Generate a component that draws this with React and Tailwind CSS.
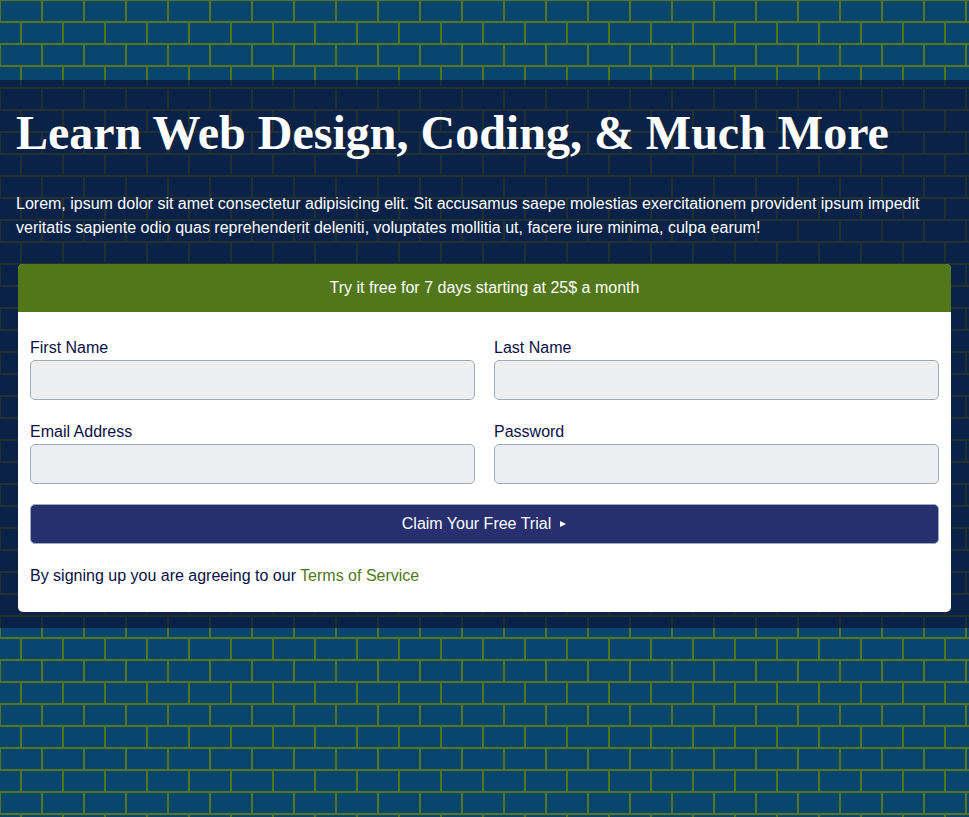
function Field({ id, label, type, autoComplete }) {
  return (
    <div className="flex flex-col">
      <label htmlFor={id}>{label}</label>
      <input
        id={id}
        name={id}
        type={type}
        autoComplete={autoComplete}
        className="h-10 w-full rounded-[5px] border border-[#9dabb9] bg-[#edeef0] px-3"
      />
    </div>
  );
}

export default function App() {
  return (
    <div className="min-h-screen bg-[#08466f] bg-[linear-gradient(#52761a_2px,transparent_2px),conic-gradient(at_2px_22px,transparent_75%,#52761a_0),conic-gradient(at_2px_22px,transparent_75%,#52761a_0)] bg-[size:42px_22px,42px_44px,42px_44px] bg-[position:0_-1px,-1px_0,20px_22px] pt-20 font-['Liberation_Sans',Arial,sans-serif] text-base text-[#0a1045]">
      <main className="flex flex-col gap-6 bg-[#0b1237]/70 px-4 pt-6 pb-4">
        <header className="text-white">
          <h1 className="mb-[30px] font-['Liberation_Serif','Times_New_Roman',serif] text-5xl leading-[58px] font-bold">
            Learn Web Design, Coding, &amp; Much More
          </h1>
          <p>
            Lorem, ipsum dolor sit amet consectetur adipisicing elit. Sit accusamus saepe molestias
            exercitationem provident ipsum impedit veritatis sapiente odio quas reprehenderit
            deleniti, voluptates mollitia ut, facere iure minima, culpa earum!
          </p>
        </header>
        <section className="mx-0.5 overflow-hidden rounded-[5px] bg-white">
          <p className="bg-[#52761a] p-3 text-center text-white">
            Try it free for 7 days starting at 25$ a month
          </p>
          <form className="grid grid-cols-2 gap-x-[19px] gap-y-5 px-3 py-6">
            <Field id="firstName" label="First Name" type="text" autoComplete="given-name" />
            <Field id="lastName" label="Last Name" type="text" autoComplete="family-name" />
            <Field id="email" label="Email Address" type="email" autoComplete="email" />
            <Field id="password" label="Password" type="password" autoComplete="new-password" />
            <button
              type="button"
              className="col-span-2 flex h-10 items-center justify-center gap-2 rounded-[5px] border border-[#9dabb9] bg-[#272f6f] text-white"
            >
              Claim Your Free Trial
              <svg viewBox="0 0 8 8" className="h-2 w-2" fill="currentColor" aria-hidden="true">
                <path d="M1 1 7 4 1 7Z" />
              </svg>
            </button>
            <p className="col-span-2">
              By signing up you are agreeing to our{" "}
              <a href="#terms" className="text-[#52761a]">
                Terms of Service
              </a>
            </p>
          </form>
        </section>
      </main>
    </div>
  );
}
